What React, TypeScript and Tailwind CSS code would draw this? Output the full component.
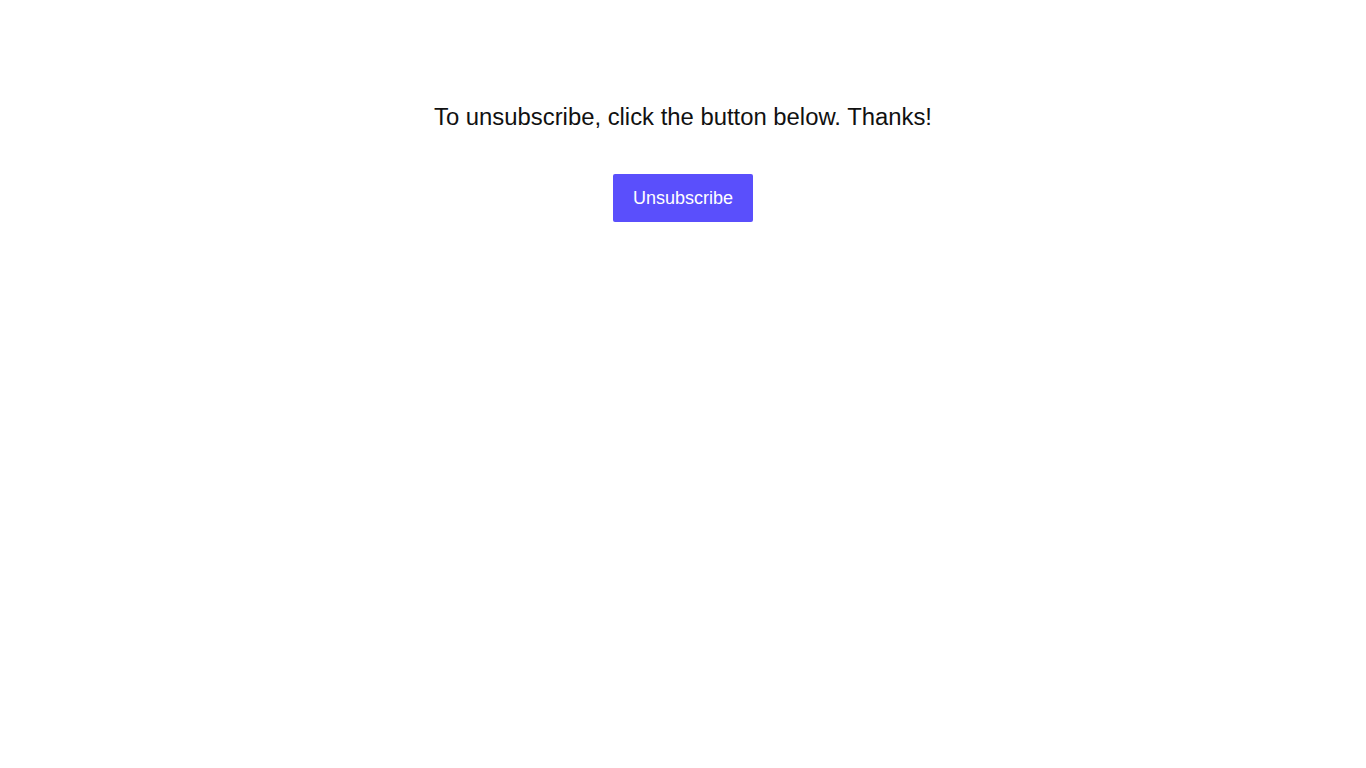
import React from "react";

const App = () => {
  return (
    <div className="min-h-screen bg-white font-['Liberation_Sans',Arial,sans-serif]">
      <div className="flex flex-col items-center pt-[99px]">
        <p className="text-[23.85px] leading-[36px] text-[#111111]">
          To unsubscribe, click the button below. Thanks!
        </p>
        <button
          type="button"
          className="mt-[39px] h-[48px] px-[20px] rounded-[2px] bg-[#5a4ffc] text-[18px] text-white"
        >
          Unsubscribe
        </button>
      </div>
    </div>
  );
};

export default App;
